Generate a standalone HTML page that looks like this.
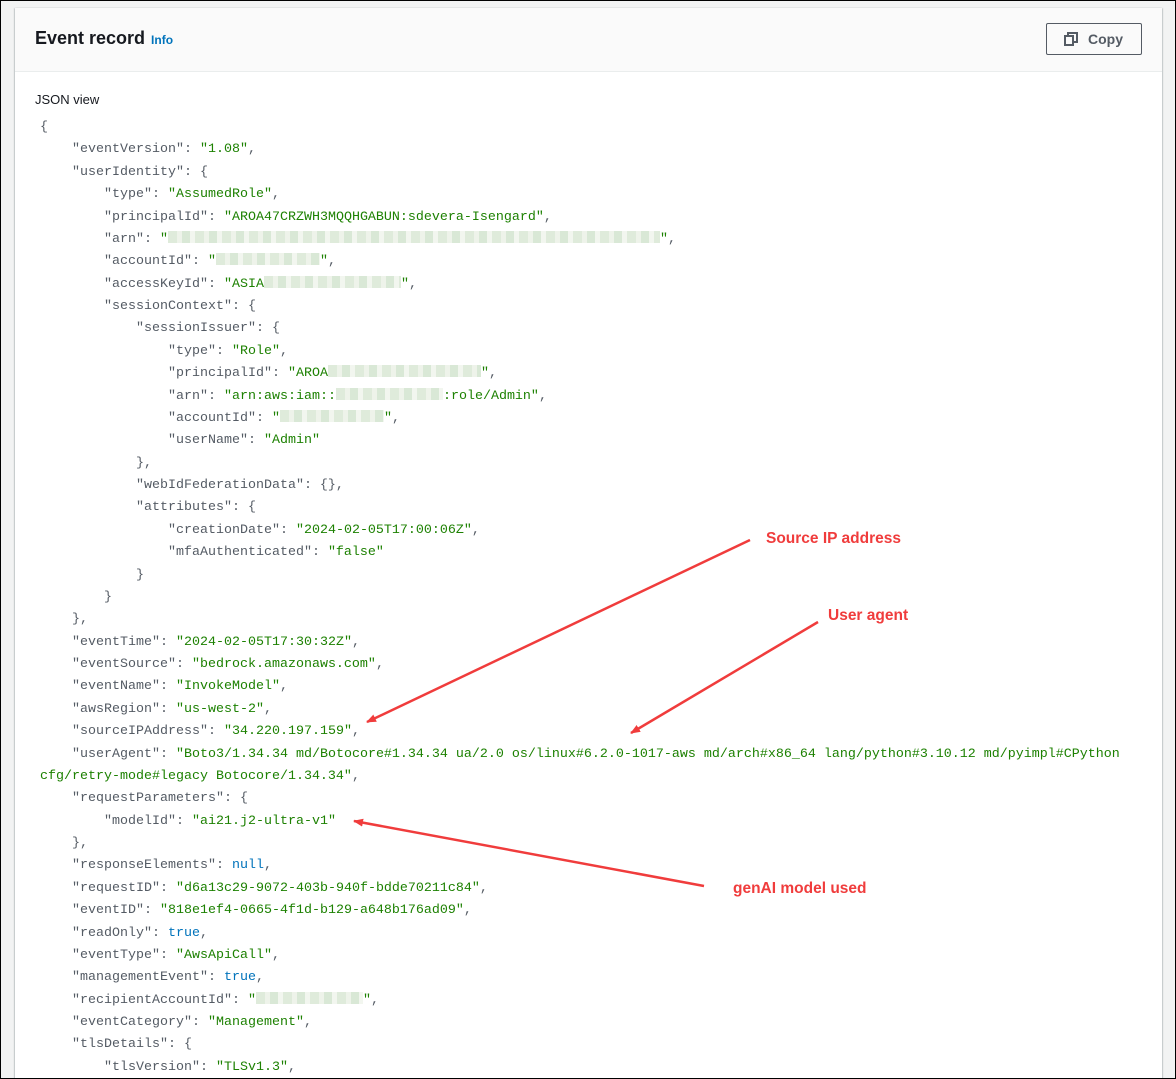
<!DOCTYPE html>
<html><head><meta charset="utf-8"><style>
html,body{margin:0;padding:0}
body{width:1176px;height:1079px;overflow:hidden;background:#f2f3f3;position:relative;font-family:"Liberation Sans",sans-serif}
.frame{position:absolute;left:0;top:0;width:1174px;height:1077px;border:1px solid #000;z-index:5}
.panel{position:absolute;left:15px;top:8px;width:1147px;height:1071px;overflow:hidden;background:#fff;box-shadow:0 1px 1px rgba(0,28,36,.3),1px 0 1px rgba(0,28,36,.15),-1px 0 1px rgba(0,28,36,.15)}
.hdr{position:absolute;left:0;top:0;width:1147px;height:63px;background:#fafafa;border-bottom:1px solid #eaeded}
.title{position:absolute;left:20px;top:20px;font-size:18px;font-weight:bold;color:#16191f}
.info{font-size:12px;color:#0073bb;margin-left:6px;font-weight:bold}
.copy{position:absolute;left:1031px;top:15px;width:96px;height:32px;border:1px solid #545b64;border-radius:2px;box-sizing:border-box;color:#545b64;font-weight:bold;font-size:14px}
.copy span{position:absolute;left:41px;top:7px}
.copy svg{position:absolute;left:17px;top:8px}
.jv{position:absolute;left:20px;top:84px;font-size:13px;color:#16191f}
pre{position:absolute;left:25px;top:109px;margin:0;font-family:"Liberation Mono",monospace;font-size:13.33px;line-height:22.38px;color:#545b64}
.s{color:#1d8102}.n{color:#0073bb}
.b{display:inline-block;height:12px;vertical-align:-1px;background:repeating-linear-gradient(90deg,#dfebdb 0 9px,#eef3ea 9px 14px,#d9e8d6 14px 22px,#f2f6ef 22px 27px)}
.lbl{position:absolute;color:#f03c3c;font-weight:bold;font-size:15.5px}
</style></head><body>
<div class="frame"></div>
<div class="panel">
<div class="hdr"><div class="title">Event record<span class="info">Info</span></div>
<div class="copy"><svg width="14" height="14" viewBox="0 0 14 14" fill="none" stroke="#545b64" stroke-width="2"><rect x="1" y="4" width="8" height="9"/><path d="M4 4V1h9v9h-4"/></svg><span>Copy</span></div></div>
<div class="jv">JSON view</div>
<pre>{
    "eventVersion": <span class="s">"1.08"</span>,
    "userIdentity": {
        "type": <span class="s">"AssumedRole"</span>,
        "principalId": <span class="s">"AROA47CRZWH3MQQHGABUN:sdevera-Isengard"</span>,
        "arn": <span class="s">"<span class="b" style="width:492px"></span>"</span>,
        "accountId": <span class="s">"<span class="b" style="width:104px"></span>"</span>,
        "accessKeyId": <span class="s">"ASIA<span class="b" style="width:137px"></span>"</span>,
        "sessionContext": {
            "sessionIssuer": {
                "type": <span class="s">"Role"</span>,
                "principalId": <span class="s">"AROA<span class="b" style="width:153px"></span>"</span>,
                "arn": <span class="s">"arn:aws:iam::<span class="b" style="width:107px"></span>:role/Admin"</span>,
                "accountId": <span class="s">"<span class="b" style="width:104px"></span>"</span>,
                "userName": <span class="s">"Admin"</span>
            },
            "webIdFederationData": {},
            "attributes": {
                "creationDate": <span class="s">"2024-02-05T17:00:06Z"</span>,
                "mfaAuthenticated": <span class="s">"false"</span>
            }
        }
    },
    "eventTime": <span class="s">"2024-02-05T17:30:32Z"</span>,
    "eventSource": <span class="s">"bedrock.amazonaws.com"</span>,
    "eventName": <span class="s">"InvokeModel"</span>,
    "awsRegion": <span class="s">"us-west-2"</span>,
    "sourceIPAddress": <span class="s">"34.220.197.159"</span>,
    "userAgent": <span class="s">"Boto3/1.34.34 md/Botocore#1.34.34 ua/2.0 os/linux#6.2.0-1017-aws md/arch#x86_64 lang/python#3.10.12 md/pyimpl#CPython</span>
<span class="s">cfg/retry-mode#legacy Botocore/1.34.34"</span>,
    "requestParameters": {
        "modelId": <span class="s">"ai21.j2-ultra-v1"</span>
    },
    "responseElements": <span class="n">null</span>,
    "requestID": <span class="s">"d6a13c29-9072-403b-940f-bdde70211c84"</span>,
    "eventID": <span class="s">"818e1ef4-0665-4f1d-b129-a648b176ad09"</span>,
    "readOnly": <span class="n">true</span>,
    "eventType": <span class="s">"AwsApiCall"</span>,
    "managementEvent": <span class="n">true</span>,
    "recipientAccountId": <span class="s">"<span class="b" style="width:107px"></span>"</span>,
    "eventCategory": <span class="s">"Management"</span>,
    "tlsDetails": {
        "tlsVersion": <span class="s">"TLSv1.3"</span>,</pre>
</div>
<svg style="position:absolute;left:0;top:0" width="1176" height="1079">
<defs><marker id="a" markerWidth="10" markerHeight="8" refX="9" refY="4" orient="auto" markerUnits="userSpaceOnUse"><path d="M0 0L10 4L0 8z" fill="#f03c3c"/></marker></defs>
<g stroke="#f03c3c" stroke-width="2.5" fill="none" marker-end="url(#a)">
<line x1="750" y1="540" x2="367" y2="722"/>
<line x1="818" y1="622" x2="631" y2="733"/>
<line x1="704" y1="886" x2="354" y2="821"/>
</g></svg>
<div class="lbl" style="left:766px;top:530px">Source IP address</div>
<div class="lbl" style="left:828px;top:607px">User agent</div>
<div class="lbl" style="left:733px;top:880px">genAI model used</div>
</body></html>
